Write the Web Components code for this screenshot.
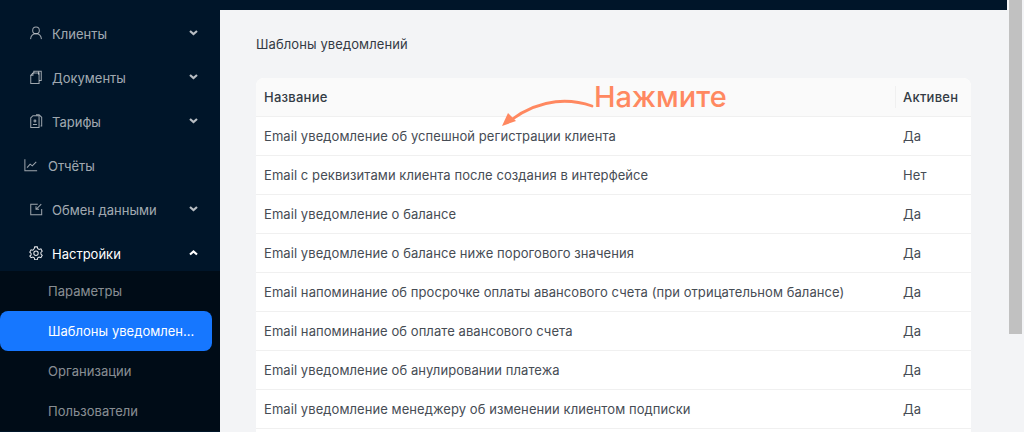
<!DOCTYPE html>
<html lang="ru"><head><meta charset="utf-8"><title>Шаблоны уведомлений</title>
<style>html,body{margin:0;height:432px;overflow:hidden;font-family:Inter,"Noto Sans",sans-serif}</style>
</head><body>
<app-shell>
  <side-nav slot="side">
    <nav-item label="Клиенты" chevron="down"><svg viewBox="0 0 16 16"><circle cx="8" cy="5" r="3.800"/><path d="M1.800 15c.3-3.800 2.600-6.200 6.200-6.200s5.900 2.400 6.200 6.200"/></svg></nav-item>
    <nav-item label="Документы" chevron="down"><svg viewBox="0 0 16 16"><path d="M5.500 3.500V1.500h5.500v4M11 1.500h3v10.500h-2.500"/><path d="M2 6l2.500-2.500h7v12H2z"/><path d="M4.500 3.500V6H2"/></svg></nav-item>
    <nav-item label="Тарифы" chevron="down"><svg viewBox="0 0 16 16"><path d="M2 4.500l2.500-2.500h7v13.500H2z"/><path d="M8 .8h3.500l3 3v10h-1.200"/><circle cx="6.800" cy="8" r="1.100"/><path d="M4.500 12h4.600"/></svg></nav-item>
    <nav-item label="Отчёты" flat><svg viewBox="0 0 16 16"><path d="M1 1.500v13h14"/><path d="M3.500 11l3.500-4 2.500 2 4.500-4.500"/></svg></nav-item>
    <nav-item label="Обмен данными" chevron="down"><svg viewBox="0 0 16 16"><path d="M10 2.500H2v12h12.500V8"/><path d="M14 2.500L8.500 8M8 4.800V8.300h3.500"/></svg></nav-item>
    <nav-item label="Настройки" chevron="up" open><svg viewBox="0 0 16 16"><path d="M6.500 1h3l.5 2 1.600.9 2-.6 1.500 2.700-1.500 1.400v1.800l1.500 1.400-1.500 2.700-2-.6-1.600.9-.5 2h-3l-.5-2-1.600-.9-2 .6L.9 11.600l1.500-1.400V8.400L.9 7l1.500-2.700 2 .6L6 3z"/><circle cx="8" cy="8.300" r="2.500"/></svg></nav-item>
    <sub-menu>
      <sub-item>Параметры</sub-item>
      <sub-item active>Шаблоны уведомлений</sub-item>
      <sub-item>Организации</sub-item>
      <sub-item>Пользователи</sub-item>
    </sub-menu>
  </side-nav>
  <top-bar slot="top"></top-bar>
  <page-title slot="main">Шаблоны уведомлений</page-title>
  <template-table slot="main">
    <table-row head name="Название" value="Активен"></table-row>
    <table-row name="Email уведомление об успешной регистрации клиента" value="Да"></table-row>
    <table-row name="Email с реквизитами клиента после создания в интерфейсе" value="Нет"></table-row>
    <table-row name="Email уведомление о балансе" value="Да"></table-row>
    <table-row name="Email уведомление о балансе ниже порогового значения" value="Да"></table-row>
    <table-row name="Email напоминание об просрочке оплаты авансового счета (при отрицательном балансе)" value="Да"></table-row>
    <table-row name="Email напоминание об оплате авансового счета" value="Да"></table-row>
    <table-row name="Email уведомление об анулировании платежа" value="Да"></table-row>
    <table-row name="Email уведомление менеджеру об изменении клиентом подписки" value="Да"></table-row>
    <table-row name="" value=""></table-row>
    <click-hint slot="over">Нажмите</click-hint>
  </template-table>
  <fake-scrollbar slot="bar"></fake-scrollbar>
</app-shell>
<script>
function def(name, html){
  customElements.define(name, class extends HTMLElement{
    connectedCallback(){
      if(this.shadowRoot) return;
      const r=this.attachShadow({mode:"open"});
      r.innerHTML=typeof html==="function"?html(this):html;
    }
  });
}
def("app-shell",`<style>
:host{display:grid;grid-template-columns:220px 787px 17px;height:432px;overflow:hidden;background:#f3f4f6}
.m{display:flex;flex-direction:column;min-width:0;height:432px;overflow:hidden}
.c{padding:0 36px}
</style><slot name="side"></slot><div class="m"><slot name="top"></slot><div class="c"><slot name="main"></slot></div></div><slot name="bar"></slot>`);
def("side-nav",`<style>:host{display:block;background:#001529;height:432px;overflow:hidden;padding-top:12px;box-sizing:border-box}</style><slot></slot>`);
const chev={down:'M1 1l3.500 3L8 1',up:'M1 4.500l3.500-3 3.500 3'};
def("nav-item",h=>{
  const c=h.getAttribute("chevron"),flat=h.hasAttribute("flat"),open=h.hasAttribute("open");
  return `<style>
:host{display:flex;align-items:center;height:44px;font-size:13px;color:${open?'#fff':'rgba(255,255,255,.65)'};padding-left:${flat?24:29}px;padding-right:22px;box-sizing:border-box;position:relative}
.i{width:14px;height:14px;margin:0 ${flat?10:9}px 2px 0;flex:none;display:flex}
::slotted(svg){width:100%;height:100%;fill:none;stroke:${open?'#e8eaed':'rgba(255,255,255,.62)'};stroke-width:1.15}
.l{flex:1}
.v{width:9px;height:6px;margin-bottom:2px;fill:none;stroke:${open?'#fff':'rgba(255,255,255,.72)'};stroke-width:2.200}
</style><span class="i"><slot></slot></span><span class="l">${h.getAttribute("label")}</span>${c?`<svg class="v" viewBox="0 0 9 6"><path d="${chev[c]}"/></svg>`:''}`;
});
def("sub-menu",`<style>:host{display:flex;flex-direction:column;background:#000c17;margin-top:-5px}</style><slot></slot>`);
def("sub-item",h=>{
  const a=h.hasAttribute("active");
  return `<style>
:host{display:block;height:40px;line-height:40px;width:212px;box-sizing:border-box;padding:0 16px 0 48px;font-size:13px;letter-spacing:.03px;white-space:nowrap;overflow:hidden;text-overflow:ellipsis;color:${a?'#fff':'rgba(255,255,255,.55)'};background:${a?'#1677ff':'transparent'};border-radius:${a?'8px':'0'}}
</style><slot></slot>`;
});
def("top-bar",`<style>:host{display:block;height:10px;flex:none;background:#001529}</style>`);
def("page-title",`<style>:host{display:block;font-size:13px;letter-spacing:.1px;line-height:20px;color:#333a44;margin:24px 0 24px}</style><slot></slot>`);
def("template-table",`<style>:host{display:block;position:relative;border-radius:8px;overflow:hidden;background:#fff;width:715px}</style><slot></slot><slot name="over"></slot>`);
def("table-row",h=>{
  const hd=h.hasAttribute("head");
  return `<style>
:host{display:grid;grid-template-columns:639px 76px;height:39px;box-sizing:border-box;border-bottom:1px solid #f0f0f0;align-items:center;font-size:13px;letter-spacing:${hd?.25:.07}px;color:${hd?'#333a44':'#464c54'};font-weight:${hd?500:400};background:${hd?'#fafafa':'#fff'}}
.n{padding-left:8px;white-space:nowrap;position:relative}
.v{padding-left:8px;position:relative}
.s{position:absolute;left:0;top:50%;height:22px;margin-top:-11px;width:1px;background:#f0f0f0}
</style><span class="n">${h.getAttribute("name")}</span><span class="v">${hd?'<i class="s"></i>':''}${h.getAttribute("value")}</span>`;
});
def("click-hint",`<style>
:host{position:absolute;left:246px;top:0;width:235px;height:50px;display:block;pointer-events:none}
.t{position:absolute;left:92px;top:0;font-size:29px;line-height:38px;font-weight:550;color:#ff8860;white-space:nowrap}
svg{position:absolute;left:0;top:0;width:100px;height:50px;fill:none;stroke:#ff8860;stroke-width:2.800;stroke-linecap:round}
.h{fill:#ff8860;stroke:none}
</style><svg viewBox="0 0 100 50"><path d="M90 28C70 21 40 19 9 42"/><path class="h" d="M0 48L6 35L14 43z"/></svg><span class="t"><slot></slot></span>`);
def("fake-scrollbar",`<style>:host{display:block;height:432px;box-sizing:border-box;padding:0 2px;background:#f3f4f6}
i{display:block;width:13px;height:334px;background:#c1c1c1}</style><i></i>`);
</script>
</body></html>
